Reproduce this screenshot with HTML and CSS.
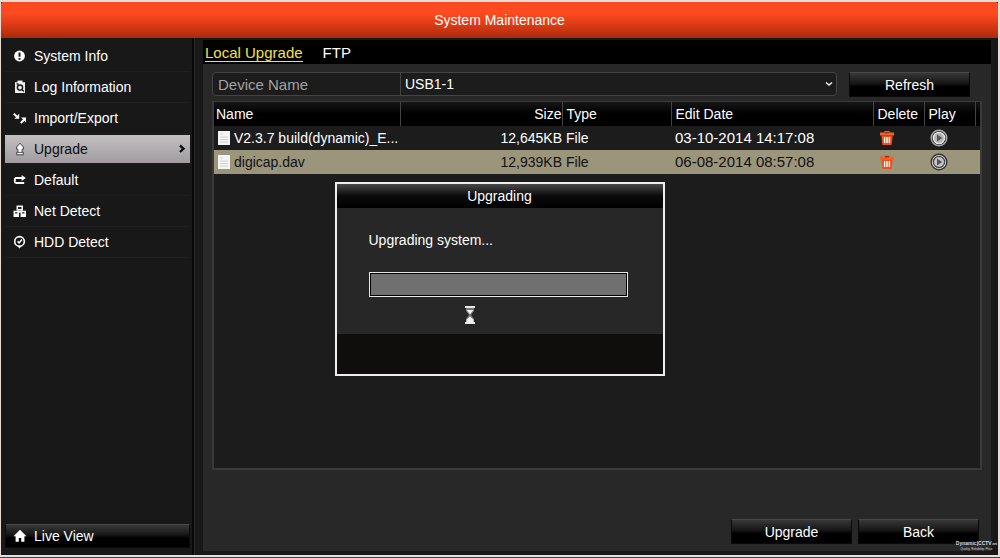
FILE: index.html
```html
<!DOCTYPE html>
<html lang="en">
<head>
    <meta charset="UTF-8">
    <title>System Maintenance</title>
    <link rel="stylesheet" href="styles.css">
</head>
<body>
<div class="frame">
    <header class="header"><h1>System Maintenance</h1></header>

    <div class="content">
        <nav class="sidebar">
            <ul class="menu">
                <li><a href="#info">
                    <svg class="icon" viewBox="0 0 14 14"><circle cx="6.5" cy="7" r="5.4" fill="#fff"/><path d="M6.5 3.4v4.4M6.5 9v1.8" stroke="#181818" stroke-width="2"/></svg>
                    System Info</a></li>
                <li><a href="#log">
                    <svg class="icon" viewBox="0 0 14 14"><path d="M2 2.2h10V13H2z" fill="#eee"/><path d="M4.5.6h5v2.2h-5z" fill="#fff"/><circle cx="7" cy="7.6" r="2.6" fill="#eee" stroke="#181818" stroke-width="1.4"/><path d="M8.7 9.3l2.2 2.2M3.6 4h2" stroke="#181818" stroke-width="1.3"/></svg>
                    Log Information</a></li>
                <li><a href="#import">
                    <svg class="icon" viewBox="0 0 14 14"><path d="M.8 2.6l3 3" stroke="#fff" stroke-width="2"/><path d="M6.2 2.8v5H1.4z" fill="#fff"/><path d="M7.8 12l3-3" stroke="#fff" stroke-width="2"/><path d="M8 6.4h5v5z" fill="#fff"/></svg>
                    Import/Export</a></li>
                <li><a class="active" href="#upgrade">
                    <svg class="icon" viewBox="0 0 14 14"><path d="M7 1.2L3.6 5v2.2h1.3v3H3.7v2.6h6.6v-2.6H9.1v-3h1.3V5z" fill="#f8f8f8" stroke="#444" stroke-width="1"/><path d="M4.5 10.4h5" stroke="#555"/></svg>
                    Upgrade
                    <svg class="arrow" viewBox="0 0 8 10"><path d="M2 1.5l3.5 3.2L2 8" fill="none" stroke="#111" stroke-width="2.4"/></svg></a></li>
                <li><a href="#default">
                    <svg class="icon" viewBox="0 0 14 14"><path d="M9 5H3.2Q1.8 5 1.8 6.4v2.2Q1.8 10 3.2 10h8" fill="none" stroke="#fff" stroke-width="1.8"/><path d="M8.6 2l4.2 3-4.2 3z" fill="#fff"/></svg>
                    Default</a></li>
                <li><a href="#net">
                    <svg class="icon" viewBox="0 0 14 14"><path d="M4.3 2.2h4.9v3.5H4.3zM1.3 7.6h3.9v2.6H1.3zM8.3 7.6h3.9v2.6H8.3z" fill="#222" stroke="#fff" stroke-width="1.5"/><path d="M5 6.8h3.6L6.8 9.2z" fill="#fff"/><path d="M.5 12h5.4M7.6 12H13" stroke="#fff" stroke-width="1.8"/></svg>
                    Net Detect</a></li>
                <li><a href="#hdd">
                    <svg class="icon" viewBox="0 0 14 14"><circle cx="6.5" cy="6.4" r="4.8" fill="none" stroke="#fff" stroke-width="1.6"/><path d="M4.6 6.4l1.5 1.5 2.8-3.3" fill="none" stroke="#fff" stroke-width="1.5"/><path d="M4.2 10.8h4.6l-2.3 2.8z" fill="#fff"/></svg>
                    HDD Detect</a></li>
            </ul>
            <a class="live" href="#live">
                <svg class="icon" viewBox="0 0 14 14"><path d="M7 .8L.6 7.2h2v5.5h3.2V9h2.4v3.7h3.2V7.2h2z" fill="#fff"/></svg>
                Live View</a>
        </nav>

        <main class="panel">
            <div class="tabs">
                <a class="current" href="#local">Local Upgrade</a>
                <a href="#ftp">FTP</a>
            </div>

            <div class="device">
                <div class="field">
                    <label for="device">Device Name</label>
                    <div class="pick">
                        <select id="device"><option>USB1-1</option></select>
                        <svg class="caret" viewBox="0 0 8 6"><path d="M1 1.5l3 2.5 3-2.5" fill="none" stroke="#eee" stroke-width="1.6"/></svg>
                    </div>
                </div>
                <button class="btn" type="button">Refresh</button>
            </div>

            <div class="list">
                <table>
                    <colgroup>
                        <col><col class="c-size"><col class="c-type"><col class="c-date"><col class="c-act"><col class="c-act"><col class="c-end">
                    </colgroup>
                    <thead>
                        <tr><th>Name</th><th class="size">Size</th><th>Type</th><th>Edit Date</th><th>Delete</th><th>Play</th><th></th></tr>
                    </thead>
                    <tbody>
                        <tr>
                            <td><div class="file"><svg class="doc" viewBox="0 0 12 14"><path d="M0 0h12v14H0z" fill="#f4f4f4"/><path d="M2 3h3M2 6h8M2 8.5h8M2 11h8" stroke="#d4d4d4"/></svg>V2.3.7 build(dynamic)_E...</div></td>
                            <td class="size">12,645KB</td><td>File</td><td class="date">03-10-2014 14:17:08</td>
                            <td><button class="act" type="button" aria-label="Delete"><svg class="trash" viewBox="0 0 16 16"><path d="M1 2.5h4.5V1h5v1.5H15v3H1z" fill="#f4602a"/><path d="M2.3 5.4h11.4L12.6 15H3.4z" fill="#e8501c"/><path d="M5.6 7v6M8 7v6M10.4 7v6" stroke="#fff" stroke-width="1.4"/><path d="M6 2.8h4" stroke="#7a2408"/></svg></button></td>
                            <td><button class="act" type="button" aria-label="Play"><svg class="play" viewBox="0 0 18 18"><circle cx="9" cy="9" r="7.8" fill="#2c2c2c" stroke="#aaa" stroke-width="1.4"/><circle cx="9" cy="9" r="5.6" fill="#b4b4b4" stroke="#e8e8e8" stroke-width="1.4"/><path d="M7 5.6l5.2 3.4L7 12.4z" fill="#555"/></svg></button></td>
                            <td></td>
                        </tr>
                        <tr class="selected">
                            <td><div class="file"><svg class="doc" viewBox="0 0 12 14"><path d="M0 0h12v14H0z" fill="#f4f4f4"/><path d="M2 3h3M2 6h8M2 8.5h8M2 11h8" stroke="#d4d4d4"/></svg>digicap.dav</div></td>
                            <td class="size">12,939KB</td><td>File</td><td class="date">06-08-2014 08:57:08</td>
                            <td><button class="act" type="button" aria-label="Delete"><svg class="trash" viewBox="0 0 16 16"><path d="M1 2.5h4.5V1h5v1.5H15v3H1z" fill="#f4602a"/><path d="M2.3 5.4h11.4L12.6 15H3.4z" fill="#e8501c"/><path d="M5.6 7v6M8 7v6M10.4 7v6" stroke="#fff" stroke-width="1.4"/><path d="M6 2.8h4" stroke="#7a2408"/></svg></button></td>
                            <td><button class="act" type="button" aria-label="Play"><svg class="play" viewBox="0 0 18 18"><circle cx="9" cy="9" r="7.8" fill="#e0e0e0" stroke="#333" stroke-width="1.4"/><circle cx="9" cy="9" r="5.6" fill="#c4c4c4" stroke="#444" stroke-width="1.2"/><path d="M7 5.6l5.2 3.4L7 12.4z" fill="#555"/></svg></button></td>
                            <td></td>
                        </tr>
                    </tbody>
                </table>
            </div>

            <div class="actions">
                <button class="btn" type="button">Upgrade</button>
                <button class="btn" type="button">Back</button>
            </div>
        </main>
    </div>

    <div class="overlay">
        <div class="dialog" role="dialog" aria-labelledby="dialog-title">
            <h2 id="dialog-title">Upgrading</h2>
            <div class="dialog-body">
                <label for="progress">Upgrading system...</label>
                <progress id="progress" value="0" max="100"></progress>
                <svg class="hourglass" viewBox="0 0 12 18"><path d="M1 1h10M1 17h10" stroke="#e8e8e8" stroke-width="2"/><path d="M2 2h8v3L7 9l3 4v3H2v-3l3-4-3-4z" fill="#777"/><path d="M2.5 4h7L6 8.2zM6 10.5l3.5 3V17h-7v-3.5z" fill="#f0f0f0"/></svg>
            </div>
            <div class="dialog-foot"></div>
        </div>
    </div>

    <div class="brand"><b>Dynamic|CCTV<small>.net</small></b><span>Quality. Reliability. Price</span></div>
</div>
</body>
</html>
```
FILE: styles.css
```css
*{ margin: 0; padding: 0; box-sizing: border-box;}
body{ height: 100vh; padding: 2px 2px 2px 1px; border-bottom: 1px solid #444; background: #e6dcd8; color: #fff;
    font: 14px/20px "Liberation Sans", Arial, sans-serif; overflow: hidden;}
a{ color: inherit; text-decoration: none;}
button, select{ font: inherit; color: inherit;}
svg{ display: block; flex: none;}
.frame{ position: relative; height: 100%; display: flex; flex-direction: column; background: #181818;}

.header{ background: linear-gradient(#fa4a22, #ff4b20 30%, #d93a14 65%, #ab2a0e); text-align: center; border-radius: 2px 2px 0 0;}
.header h1{ font-size: 14px; font-weight: normal; line-height: 36px;}

.content{ flex: 1; display: flex; min-height: 0;}

/* left menu */
.sidebar{ width: 194px; display: flex; flex-direction: column; justify-content: space-between;
    padding: 4px 4px 7px 4px; border-right: 1px solid #2a2a2a; box-shadow: inset -2px 0 #080808; background: #181818;}
.menu{ list-style: none;}
.menu li{ padding-bottom: 1px; margin-bottom: 1px; border-bottom: 1px solid #1e1e1e;}
.menu a, .live{ display: flex; align-items: center; gap: 7px; height: 28px; padding-left: 8px;}
.menu .active{ background: linear-gradient(#c4c0c2, #a09c9f); color: #0c0c0c;}
.icon{ width: 14px; height: 14px;}
.arrow{ width: 8px; height: 10px; margin: 0 4px 0 auto;}
.menu + .live{ height: 24px; padding-left: 7px;}
.live, .btn{ background: linear-gradient(#383838, #161616 45%, #000 60%, #000); border: 1px solid #0a0a0a; border-top-color: #484848;}

/* right part */
.panel{ flex: 1; min-width: 0; display: flex; flex-direction: column; margin: 2px 7px 4px 8px; background: #282828;}
.tabs{ display: flex; gap: 20px; height: 24px; padding-left: 2px; background: #000; font-size: 15px;}
.tabs a{ height: 22px; line-height: 26px;}
.tabs .current{ color: #f2e14c; border-bottom: 1px solid #f2e14c;}

.device{ display: flex; gap: 12px; padding: 8px 21px 0 9px;}
.field{ flex: 1; display: flex; height: 24px; border: 1px solid #444; border-radius: 4px; background: #1c1c1c;}
.field label{ width: 188px; padding-left: 5px; line-height: 23px; font-size: 15px; color: #a2a2a2; border-right: 1px solid #444;}
.pick{ flex: 1; display: flex; align-items: center; position: relative;}
.pick select{ width: 100%; height: 22px; padding-left: 4px; border: 0; background: none; appearance: none; outline: 0;}
.caret{ position: absolute; right: 3px; width: 8px; height: 6px; pointer-events: none;}
.btn{ width: 121px; height: 25px;}

.list{ flex: 1; margin: 4px 9px 0; border: 2px solid #3a3a3a; border-top-width: 1px; background: #1c1c1c;}
table{ width: 100%; table-layout: fixed; border-collapse: collapse;}
.c-size{ width: 162px;}
.c-type{ width: 109px;}
.c-date{ width: 202px;}
.c-act{ width: 51px;}
.c-end{ width: 5px;}
th, td{ height: 24px; padding-left: 4px; text-align: left; font-weight: normal; white-space: nowrap;}
th{ background: linear-gradient(#161616, #000 50%);}
th:first-child{ padding-left: 2px;}
th + th{ border-left: 1px solid #444;}
th.size, td.size{ padding: 0; text-align: right;}
td.date{ font-size: 15px;}
.file{ display: flex; align-items: center; gap: 4px;}
.doc{ width: 12px; height: 14px;}
.selected{ background: #9b957b; color: #111;}
.act{ display: block; margin-left: 2px; border: 0; background: none;}
.trash{ width: 16px; height: 16px;}
.play{ width: 18px; height: 18px;}

.actions{ display: flex; justify-content: flex-end; gap: 6px; padding: 49px 12px 7px 0;}

/* upgrade message */
.overlay{ position: absolute; inset: 0; display: flex; align-items: center; justify-content: center;}
.dialog{ width: 330px; border: 2px solid #eee; background: #272727;}
.dialog h2{ font-size: 14px; font-weight: normal; line-height: 24px; text-align: center; background: linear-gradient(#484848, #0a0a0a 50%, #000);}
.dialog-body{ height: 126px; padding: 22px 35px 0 32px;}
.dialog-body label{ display: block; margin-bottom: 22px;}
progress{ display: block; width: 100%; height: 25px; padding: 1px; border: 1px solid #e8e8e8; background: #000; appearance: none;}
progress::-webkit-progress-bar{ background: #707070;}
progress::-webkit-progress-value{ background: #c33a1a;}
.hourglass{ width: 12px; height: 18px; margin: 9px 0 0 95px;}
.dialog-foot{ height: 40px; background: #0f0e0c;}

/* logo in the corner */
.brand{ position: absolute; right: 1px; bottom: 4px; text-align: center; color: #ddd;}
.brand b{ display: block; font-size: 5px; line-height: 6px;}
.brand small{ font-size: 3px;}
.brand span{ display: block; font-size: 3px; line-height: 4px;}
```
